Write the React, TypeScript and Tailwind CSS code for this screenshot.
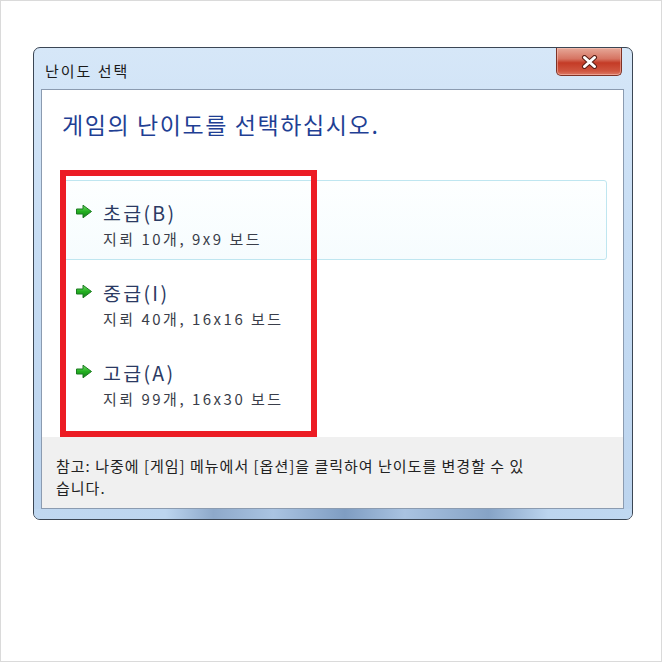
import React from "react";

const items = [
  { title: "초급(B)", desc: "지뢰 10개, 9x9 보드", hover: true },
  { title: "중급(I)", desc: "지뢰 40개, 16x16 보드", hover: false },
  { title: "고급(A)", desc: "지뢰 99개, 16x30 보드", hover: false },
];

function GreenArrow() {
  return (
    <svg width="18" height="15" viewBox="0 0 18 15">
      <defs>
        <linearGradient id="ga" x1="0" y1="0" x2="0" y2="1">
          <stop offset="0" stopColor="#6fe066" />
          <stop offset="0.5" stopColor="#24b021" />
          <stop offset="1" stopColor="#138018" />
        </linearGradient>
      </defs>
      <polygon
        points="1.5,5 8,5 8,1.2 16.5,7.5 8,13.8 8,10 1.5,10"
        fill="url(#ga)"
        stroke="#1b7a20"
        strokeWidth="1"
        strokeLinejoin="round"
      />
    </svg>
  );
}

function CloseButton() {
  return (
    <div className="absolute top-0 right-[10px] w-[66px] h-[28px] rounded-b-[5px] border border-t-0 border-[#7e3226] bg-[linear-gradient(to_bottom,#e6a898_0%,#d67462_40%,#c43b26_55%,#cf553f_85%,#dd7a66_100%)] flex items-center justify-center shadow-[inset_0_0_0_1px_rgba(255,210,200,0.45)]">
      <svg width="17" height="14" viewBox="0 0 17 14">
        <path d="M3.5 2.5 L13.5 11.5 M13.5 2.5 L3.5 11.5" stroke="#5a1f16" strokeWidth="5" strokeLinecap="round" />
        <path d="M3.5 2.5 L13.5 11.5 M13.5 2.5 L3.5 11.5" stroke="#ffffff" strokeWidth="3" strokeLinecap="round" />
      </svg>
    </div>
  );
}

export default function App() {
  return (
    <div className="relative w-[662px] h-[662px] border border-[#dadada] bg-white font-['Noto_Sans_CJK_KR','Noto_Sans',sans-serif]">
      {/* window */}
      <div className="relative ml-[32px] mt-[46px] w-[600px] h-[473px] rounded-[7px] border border-[#3b4654] bg-[linear-gradient(to_bottom,#d6e7f8_0%,#c7ddf4_40%,#bcd4ee_100%)] flex flex-col px-[7px]">
        <div className="h-[41px] shrink-0 flex items-center pt-[5px] pl-[4px] text-[15px] tracking-[2px] text-[#1a1a1a]">
          난이도 선택
        </div>
        <CloseButton />

        <div className="w-[583px] h-[420px] border border-[#8b9bb0] bg-white flex flex-col">
          <div className="h-[347px] shrink-0 pl-[20px] pt-[19px]">
            <div className="text-[23px] leading-[30px] tracking-[1.6px] text-[#1f3f94]">
              게임의 난이도를 선택하십시오.
            </div>
            <div className="mt-[41px] w-[545px] flex flex-col">
              {items.map((it) => (
                <div
                  key={it.title}
                  className={
                    it.hover
                      ? "h-[80px] rounded-[3px] border border-[#bfe6f0] bg-[linear-gradient(to_bottom,#fdffff,#f6fcfe)] pl-[12px] pt-[19px]"
                      : "h-[80px] rounded-[3px] border border-transparent pl-[12px] pt-[19px]"
                  }
                >
                  <div className="flex items-center h-[26px]">
                    <div className="w-[18px] h-[15px] -mt-[3px]">
                      <GreenArrow />
                    </div>
                    <div className="ml-[10px] text-[19.5px] leading-[26px] tracking-[2.3px] text-[#2b3a63]">
                      {it.title}
                    </div>
                  </div>
                  <div className="ml-[28px] text-[15px] leading-[26px] tracking-[2.5px] text-[#3a3e4a]">
                    {it.desc}
                  </div>
                </div>
              ))}
            </div>
          </div>
          <div className="flex-1 bg-[#f0f0f0] pl-[14px] pt-[18px] text-[15px] leading-[22px] tracking-[1px] text-[#222222]">
            <div className="whitespace-nowrap">참고: 나중에 [게임] 메뉴에서 [옵션]을 클릭하여 난이도를 변경할 수 있</div>
            <div className="whitespace-nowrap">습니다.</div>
          </div>
        </div>

        <div className="flex-1 mx-[-7px] rounded-b-[6px] bg-[linear-gradient(to_right,#c0d8f1_0%,#bcd5ef_22%,#8ea9ca_30%,#aac4e2_40%,#7f9dc2_52%,#a9c3e1_62%,#86a3c6_76%,#bcd5ef_86%,#c0d8f1_100%)]" />
      </div>

      {/* red highlight annotation */}
      <div className="absolute left-[59px] top-[169px] w-[257px] h-[267px] border-[6px] border-[#ec1c24]" />
    </div>
  );
}
